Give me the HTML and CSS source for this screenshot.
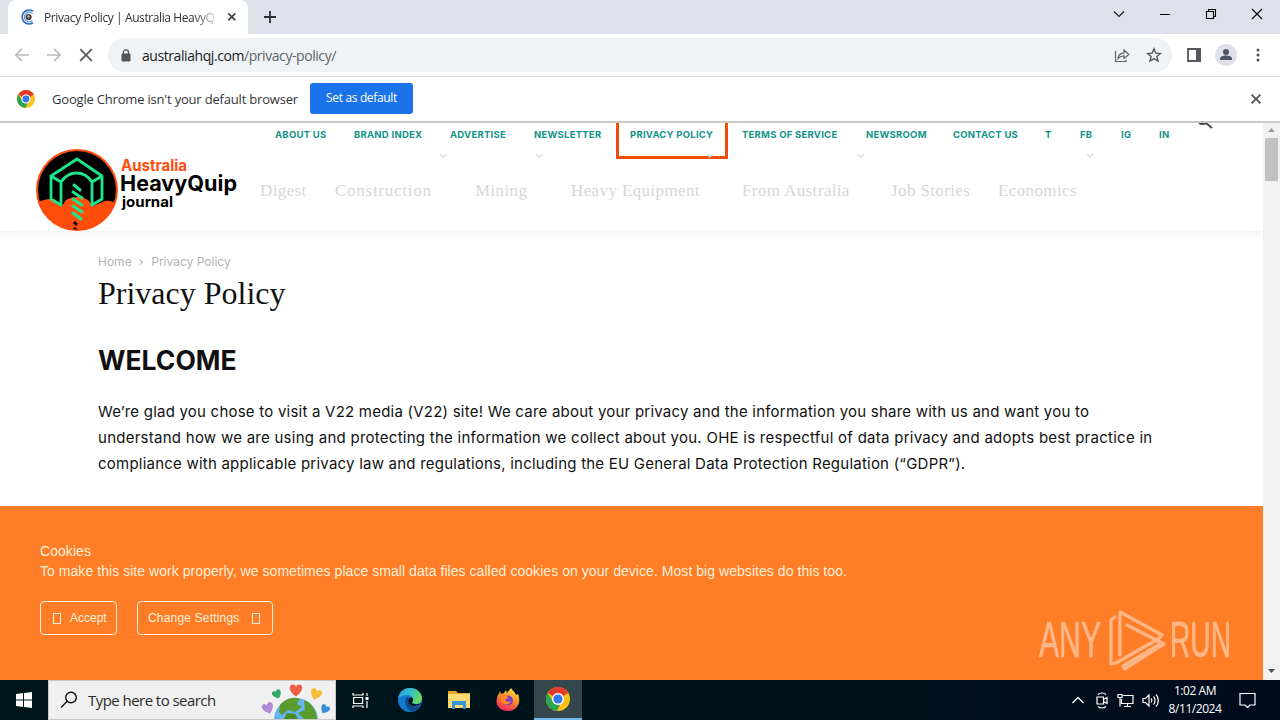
FILE: index.html
```html
<!DOCTYPE html>
<html lang="en">
<head>
<meta charset="UTF-8">
<meta name="viewport" content="width=device-width, initial-scale=1.0">
<title>Privacy Policy | Australia HeavyQuip Journal</title>
<link rel="stylesheet" href="styles.css">
</head>
<body>

<div class="tabs">
  <div class="tab">
    <svg class="favicon" width="16" height="16" viewBox="0 0 16 16" fill="none"><path d="M13 2.200A7 7 0 1 0 13 13.800" stroke="#2f6fc4" stroke-width="1.700"/><path d="M12.500 4.600A4.800 4.800 0 1 0 12.500 11.400" stroke="#5b93d6" stroke-width="1.200"/><circle cx="8.600" cy="8" r="3.100" fill="#4a4048"/><path d="M7 7l2-1 1 2-2 1z" fill="#c9aa98"/></svg>
    <span class="tab-title">Privacy Policy | Australia HeavyQ</span>
    <svg width="10" height="10" viewBox="0 0 10 10" stroke="#3c4043" stroke-width="1.700"><path d="M1.300 1.300l7 7M8.300 1.300l-7 7"/></svg>
  </div>
  <svg class="new-tab" width="12" height="12" viewBox="0 0 12 12" stroke="#2c2f33" stroke-width="1.800"><path d="M6 0v12M0 6h12"/></svg>
  <div class="window-buttons">
    <svg width="12" height="12" viewBox="0 0 12 12" fill="none" stroke="#222" stroke-width="1.200"><path d="M1 3.500l5 5 5-5"/></svg>
    <svg width="12" height="12" viewBox="0 0 12 12" stroke="#000"><path d="M1 6.500h10"/></svg>
    <svg width="12" height="12" viewBox="0 0 12 12" fill="none" stroke="#000" stroke-width="1.100"><path d="M1.500 3.500h7v7h-7zM3.500 3.500V1.500h7v7h-2"/></svg>
    <svg width="12" height="12" viewBox="0 0 12 12" stroke="#000" stroke-width="1.100"><path d="M1 1l10 10M11 1L1 11"/></svg>
  </div>
</div>

<div class="toolbar">
  <svg width="16" height="16" viewBox="0 0 16 16" fill="none" stroke="#b9bbbe" stroke-width="1.700"><path d="M15 8H2M8 1.800L1.800 8 8 14.200"/></svg>
  <svg width="16" height="16" viewBox="0 0 16 16" fill="none" stroke="#b9bbbe" stroke-width="1.700"><path d="M1 8h13M8 1.800L14.200 8 8 14.200"/></svg>
  <svg width="16" height="16" viewBox="0 0 16 16" fill="none" stroke="#54575b" stroke-width="1.700"><path d="M2.200 2.200l11.600 11.600M13.800 2.200L2.200 13.800"/></svg>
  <div class="address">
    <svg width="10" height="13" viewBox="0 0 10 13"><path d="M1 5h8v7H1z" fill="#54575b" stroke="#54575b" stroke-linejoin="round"/><path d="M2.500 5V3.300a2.500 2.500 0 0 1 5 0V5" fill="none" stroke="#54575b" stroke-width="1.300"/></svg>
    <span class="url"><b>australiahqj.com</b>/privacy-policy/</span>
    <svg class="share" width="16" height="15" viewBox="0 0 16 15" fill="none" stroke="#5f6368" stroke-width="1.200"><path d="M1.500 3v10.500h10.500v-2M4 10.500c.4-3.700 2.400-5.300 6-5.300V2l4.800 4.500L10 10.500V7.800C7.300 7.800 5.600 8.600 4 10.500z"/></svg>
    <svg width="16" height="16" viewBox="0 0 16 16" fill="none" stroke="#54575b" stroke-width="1.400"><path d="M8 1.800l1.800 4.300 4.600.4-3.500 3 1.100 4.500L8 11.600 4 14l1.100-4.500-3.500-3 4.600-.4z"/></svg>
  </div>
  <svg class="panel-icon" width="14" height="14" viewBox="0 0 14 14"><path d="M1 1h12v12H1z" fill="none" stroke="#54575b" stroke-width="1.800"/><path d="M9 0h5v14H9z" fill="#54575b"/></svg>
  <svg class="avatar" width="22" height="22" viewBox="0 0 22 22"><circle cx="11" cy="11" r="11" fill="#dee1e9"/><circle cx="11" cy="8" r="3" fill="#4f5668"/><path d="M5 16v-1c0-2.600 3-3.500 6-3.500s6 .9 6 3.500v1z" fill="#4f5668"/></svg>
  <svg width="4" height="14" viewBox="0 0 4 14" fill="#4b4e52"><circle cx="2" cy="2" r="1.500"/><circle cx="2" cy="7" r="1.500"/><circle cx="2" cy="12" r="1.500"/></svg>
</div>

<div class="infobar">
  <svg width="18" height="18" viewBox="0 0 24 24"><use href="#chrome"/></svg>
  <span class="infobar-text">Google Chrome isn't your default browser</span>
  <button class="default-btn">Set as default</button>
  <svg class="infobar-close" width="10" height="10" viewBox="0 0 10 10" stroke="#4b4e52" stroke-width="1.700"><path d="M.6.6l8.800 8.800M9.400.6L.6 9.400"/></svg>
</div>

<div class="viewport">
  <div class="page">
    <header class="site-header">
      <svg class="logo" width="204" height="82" viewBox="0 0 204 82">
        <defs><clipPath id="disc"><circle cx="41" cy="41" r="39.500"/></clipPath></defs>
        <circle cx="41" cy="41" r="41" fill="#ff4d0c"/>
        <circle cx="41" cy="41" r="39" fill="#000"/>
        <g clip-path="url(#disc)">
          <path d="M0 53c6-1 10-3 14-3l12 7 4-6c7-4 16-4 22 0l5 6 12-5c6-1 8 2 13 2v30H0z" fill="#ff4d0c"/>
          <g fill="none" stroke="#1ce68c" stroke-width="2.800" stroke-linejoin="round" stroke-linecap="round">
            <path d="M15 27L41 10l25 17v23l-10 6V33L66 27M15 27v23l10 6V33L15 27M25 33c8-12 23-12 31 0"/>
            <path stroke-width="3" d="M38 36l6 5M37 43l9 6M37 50l9 6M37 57l9 6M37 64l8 6"/>
          </g>
          <path d="M38 73l3 3M38 79l3 3" stroke="#000" stroke-width="3"/>
        </g>
        <g class="logo-text">
          <text x="85" y="22" font-size="15.500" fill="#ff4d0c" textLength="66" lengthAdjust="spacingAndGlyphs">Australia</text>
          <text x="84" y="42" font-size="21.500" textLength="117" lengthAdjust="spacingAndGlyphs">HeavyQuip</text>
          <text x="86" y="58" font-size="14.500" textLength="51" lengthAdjust="spacingAndGlyphs">journal</text>
        </g>
      </svg>
      <div class="menus">
        <nav class="top-menu">
          <a>ABOUT US</a><a>BRAND INDEX</a><a>ADVERTISE</a><a>NEWSLETTER</a><a class="current">PRIVACY POLICY</a><a>TERMS OF SERVICE</a><a>NEWSROOM</a><a>CONTACT US</a><a>T</a><a>FB</a><a>IG</a><a>IN</a>
        </nav>
        <div class="carets">
          <svg viewBox="0 0 8 5"><path d="M1 1l3 3 3-3"/></svg>
          <svg viewBox="0 0 8 5"><path d="M1 1l3 3 3-3"/></svg>
          <svg viewBox="0 0 8 5"><path d="M1 1l3 3 3-3"/></svg>
          <svg viewBox="0 0 8 5"><path d="M1 1l3 3 3-3"/></svg>
          <svg viewBox="0 0 8 5"><path d="M1 1l3 3 3-3"/></svg>
        </div>
        <nav class="main-menu">
          <a>Digest</a><a class="wide">Construction</a><a>Mining</a><a>Heavy Equipment</a><a>From Australia</a><a>Job Stories</a><a>Economics</a>
        </nav>
      </div>
      <svg class="search" width="16" height="7" viewBox="0 0 16 7" fill="none" stroke="#444" stroke-width="2"><path d="M1 0c2 1 5 1 7 0l6 5"/></svg>
    </header>

    <main class="article">
      <div class="crumbs"><span>Home</span><i>›</i><span>Privacy Policy</span></div>
      <h1>Privacy Policy</h1>
      <h2>WELCOME</h2>
      <p>
        <span class="line-1">We’re glad you chose to visit a V22 media (V22) site! We care about your privacy and the information you share with us and want you to</span><br>
        <span class="line-2">understand how we are using and protecting the information we collect about you. OHE is respectful of data privacy and adopts best practice in</span><br>
        <span class="line-3">compliance with applicable privacy law and regulations, including the EU General Data Protection Regulation (“GDPR”).</span>
      </p>
    </main>

    <section class="cookies">
      <div class="cookies-text">Cookies<br><span>To make this site work properly, we sometimes place small data files called cookies on your device. Most big websites do this too.</span></div>
      <div class="cookies-buttons">
        <button class="accept"><i class="box"></i>Accept</button>
        <button class="change">Change Settings<i class="box"></i></button>
      </div>
    </section>

    <svg class="watermark" width="200" height="64" viewBox="0 0 200 64">
      <text x="2" y="48" textLength="62" lengthAdjust="spacingAndGlyphs">ANY</text>
      <text x="133" y="48" textLength="61" lengthAdjust="spacingAndGlyphs">RUN</text>
      <g fill="none" stroke-width="3.200" stroke-linejoin="round" stroke-linecap="round">
        <path d="M78 8l-4 3v44l5-1 42-24"/>
        <path d="M83 46V3l42 23-3 3"/>
        <path d="M90 16l35 18-39 23 2 3 39-25"/>
      </g>
    </svg>
  </div>
  <div class="scrollbar">
    <svg width="7" height="4" viewBox="0 0 7 4"><path d="M0 4l3.500-4L7 4z" fill="#9a9a9a"/></svg>
    <div class="thumb"></div>
    <svg class="down" width="7" height="4" viewBox="0 0 7 4"><path d="M0 0l3.500 4L7 0z" fill="#505050"/></svg>
  </div>
</div>

<div class="taskbar">
  <div class="start"><svg width="16" height="16" viewBox="0 0 16 16" fill="#fff"><path d="M0 2l7-1v6.500H0zM8 .9L16 0v7.500H8zM0 8.500h7V15l-7-1zM8 8.500h8V16l-8-1z"/></svg></div>
  <div class="search-box">
    <svg width="18" height="18" viewBox="0 0 18 18" fill="none" stroke="#111" stroke-width="1.400"><circle cx="11" cy="6.500" r="5.300"/><path d="M7.200 10.300L1 16.500"/></svg>
    <span>Type here to search</span>
    <svg class="earth" width="70" height="37" viewBox="0 0 70 37">
      <defs><path id="heart" d="M0 6C-8 0-6-5-3-5-1-5 0-3 0-3s1-2 3-2c3 0 5 5-3 11z"/></defs>
      <circle cx="35" cy="38" r="22" fill="#66b4f2"/>
      <path d="M19 23c5-6 13-9 20-6l-3 5 5 3-7 5-7-2-6 5-3-3zM43 18c7 3 12 9 13 19H43l-6-6 7-3z" fill="#5b9b2b"/>
      <path d="M26 31l8 1 3 5H23z" fill="#4c8c24"/>
      <use href="#heart" transform="translate(7 26) rotate(-20)" fill="#b48ad8"/>
      <use href="#heart" transform="translate(16 12) rotate(-25) scale(.8)" fill="#35a766"/>
      <use href="#heart" transform="translate(35 8) scale(1.100)" fill="#ef5e47"/>
      <use href="#heart" transform="translate(55 12) rotate(20)" fill="#f6bd3b"/>
      <use href="#heart" transform="translate(64 27) rotate(30) scale(.8)" fill="#3d91dc"/>
    </svg>
  </div>
  <div class="apps">
    <div class="app"><svg width="17" height="17" viewBox="0 0 17 17" fill="none" stroke="#fff" stroke-width="1.200"><path d="M1 1v2h10V1M1 16v-2h10v2M1.600 5.500h9v6h-9zM15 1v3M15 9v7"/><path d="M13.500 5h3v3h-3z" fill="#fff" stroke="none"/></svg></div>
    <div class="app"><svg width="24" height="24" viewBox="0 0 24 24">
      <defs>
        <linearGradient id="edge-top" x1="0" y1="0" x2="1" y2=".3"><stop offset="0" stop-color="#1f9ee4"/><stop offset=".6" stop-color="#35c1c5"/><stop offset="1" stop-color="#68d95e"/></linearGradient>
      </defs>
      <circle cx="12" cy="12" r="12" fill="#1379ce"/>
      <path d="M0 11C1 3 7 0 12 0c7 0 12 5 12 10 0 4-3 6-6 6-3 0-4-1-4-2 1-1 1-2 1-3 0-2-3-4-6-4-4 0-8 2-9 4z" fill="url(#edge-top)"/>
      <path d="M9 9c-4 5-1 12 5 14.500 4-.7 7-3 8.500-6C16 21 8 16 11 10z" fill="#114a8c"/>
      <path d="M14 14c1-1 1.300-2 1-3-.5-2-3-2-4.200 0C9 14 12 18 16 18c3 0 5-.6 6.500-1.700l.8-1.300C20 17 14 16.500 14 14z" fill="#00151c"/>
    </svg></div>
    <div class="app"><svg width="22" height="20" viewBox="0 0 22 20"><path d="M0 1h8l2 2h12v15H0z" fill="#e9a72c"/><path d="M0 4h22v14H0z" fill="#fddb72"/><path d="M4 11h14v8h-3v-4H7v4H4z" fill="#3b94d9"/></svg></div>
    <div class="app"><svg width="24" height="24" viewBox="0 0 24 24">
      <defs><linearGradient id="fox" x1=".8" y1="0" x2=".3" y2="1"><stop offset="0" stop-color="#ffe94a"/><stop offset=".45" stop-color="#ff9125"/><stop offset="1" stop-color="#f5245f"/></linearGradient></defs>
      <path d="M4 3l1 3 3-1 2-3 1 3 4-5c2 3 4 4 5 7l2-1c4 10-2 17-10 17S-1 18 1 10c.4-3 2-4 3-7z" fill="url(#fox)"/>
      <circle cx="12" cy="12.500" r="5" fill="#7941c5"/>
      <path d="M5 8c3-2 6 0 8 2-2 0-3 1-4 2 1 2 4 2 6 1-1 4-7 5-10 0z" fill="#ff8b27"/>
    </svg></div>
    <div class="app active"><svg width="24" height="24" viewBox="0 0 24 24">
      <g id="chrome"><circle cx="12" cy="12" r="12" fill="#fbc116"/><path d="M12 12L1.600 6A12 12 0 0 1 22.400 6z" fill="#e33b2e"/><path d="M1.600 6l5.600 9L12 17l2 .5L11 24A12 12 0 0 1 1.600 6z" fill="#2da44e"/><circle cx="12" cy="12" r="6" fill="#fff"/><circle cx="12" cy="12" r="4.600" fill="#3478ed"/></g>
    </svg></div>
  </div>
  <div class="tray">
    <svg width="14" height="8" viewBox="0 0 14 8" fill="none" stroke="#fff" stroke-width="1.300"><path d="M1.500 7L7 1.500 12.500 7"/></svg>
    <svg class="meet" width="14" height="17" viewBox="0 0 14 17" fill="none" stroke="#fff" stroke-width="1.200"><path d="M3 2.500c2-2 6-2 8 0M3 14.500c2 2 6 2 8 0M2 5h6.500v7H2zM8.500 7.500L12 5.500v6l-3.500-2"/></svg>
    <svg width="17" height="15" viewBox="0 0 17 15" fill="none" stroke="#fff" stroke-width="1.200"><path d="M6 2.500h10v8H4.500V6M10.500 10.500v3M7 13.500h7M1 1.500h4v3H1zM3 4.500v9"/></svg>
    <svg width="17" height="15" viewBox="0 0 17 15" fill="none" stroke="#fff" stroke-width="1.200"><path d="M1 5.500h2.500L7 2v11L3.500 9.500H1zM9 5.500c1 1 1 3 0 4M11.500 3.500c2 2 2 6 0 8M14 1.500c3 3 3 9 0 12"/></svg>
    <div class="clock">1:02 AM<br>8/11/2024</div>
    <svg class="notice" width="17" height="17" viewBox="0 0 17 17" fill="none" stroke="#fff" stroke-width="1.200"><path d="M1 1.500h15v11.500h-5l-2.500 2.500L6 13H1z"/></svg>
  </div>
</div>

</body>
</html>
```
FILE: styles.css
```css
* {
  box-sizing: border-box;
}

body {
  margin: 0;
  width: 1280px;
  height: 720px;
  overflow: hidden;
  display: flex;
  flex-direction: column;
  background: #fff;
  font-family: "Open Sans", "Noto Sans", sans-serif;
}

svg {
  flex: none;
  display: block;
}

button {
  font-family: inherit;
  margin: 0;
}

/* Browser window */
.tabs {
  height: 34px;
  flex: none;
  display: flex;
  align-items: center;
  background: #dee1e9;
  padding-left: 8px;
}

.tab {
  width: 240px;
  height: 34px;
  display: flex;
  align-items: center;
  background: #fff;
  border-radius: 8px 8px 0 0;
  padding: 0 11px 0 12px;
}

.tab-title {
  width: 172px;
  margin: 0 11px 0 8px;
  overflow: hidden;
  white-space: nowrap;
  font-size: 12px;
  letter-spacing: -0.4px;
  color: #303236;
  -webkit-mask-image: linear-gradient(to right, #000 150px, transparent 176px);
  mask-image: linear-gradient(to right, #000 150px, transparent 176px);
}

.new-tab {
  margin-left: 16px;
}

.window-buttons {
  display: flex;
  gap: 34px;
  margin: -6px 17px 0 auto;
}

.toolbar {
  height: 43px;
  flex: none;
  display: flex;
  align-items: center;
  gap: 16px;
  padding: 0 20px 0 14px;
  border-bottom: 1px solid #d8d9db;
}

.address {
  flex: 1;
  height: 34px;
  margin: 0 -1px 0 -2px;
  display: flex;
  align-items: center;
  background: #f0f3f6;
  border-radius: 17px;
  padding: 0 10px 0 13px;
}

.url {
  margin-left: 11px;
  font-size: 14px;
  letter-spacing: -0.43px;
  color: #5f6368;
}

.url b {
  font-weight: 400;
  color: #202124;
}

.share {
  margin: 0 16px 0 auto;
}

.panel-icon {
  margin-right: -2px;
}

.avatar {
  margin-right: 3px;
}

.infobar {
  height: 44px;
  flex: none;
  display: flex;
  align-items: center;
  padding: 0 19px 0 17px;
}

.infobar-text {
  width: 246px;
  margin: 0 12px 0 17px;
  white-space: nowrap;
  font-size: 13px;
  letter-spacing: -0.19px;
  color: #333539;
}

.default-btn {
  width: 103px;
  height: 31px;
  margin-bottom: 2px;
  border: none;
  border-radius: 3px;
  background: #1a73e8;
  color: #fff;
  font-size: 12px;
  letter-spacing: -0.35px;
  padding: 0 0 2px;
}

.infobar-close {
  margin-left: auto;
}

/* Site */
.viewport {
  flex: 1;
  min-height: 0;
  display: flex;
  border-top: 2px solid #c9c9c9;
}

.page {
  position: relative;
  flex: 1;
  overflow: hidden;
  font-family: Inter, sans-serif;
}

.site-header {
  height: 108px;
  display: flex;
  padding-left: 36px;
  box-shadow: 0 1px 8px rgba(0, 0, 0, .08);
}

.logo {
  margin-top: 26px;
}

.logo-text {
  font-family: Inter, sans-serif;
  font-weight: 700;
}

.menus {
  width: 958px;
}

.top-menu {
  height: 36px;
  display: grid;
  grid-template-columns: 79px 96px 84px 96px 112px 124px 87px 92px 35px 41px 38px 40px;
  padding-left: 35px;
  font-size: 9.500px;
  font-weight: 700;
  letter-spacing: 0.25px;
  line-height: 23px;
  white-space: nowrap;
  color: #119488;
}

.top-menu .current {
  width: 112px;
  margin-left: -14px;
  padding-left: 11px;
  border: 3px solid #f04e10;
  border-top: 0;
}

.carets {
  display: grid;
  grid-template-columns: 96px 171px 151px 229px 8px;
  padding-left: 199px;
  margin-top: -6px;
}

.carets svg {
  width: 8px;
  height: 5px;
  fill: none;
  stroke: #dcdcdc;
  stroke-width: 1.300;
}

.main-menu {
  display: grid;
  grid-template-columns: 75px 140px 96px 171px 149px 107px 90px;
  margin-top: 21px;
  padding-left: 20px;
  font-family: "Liberation Serif", serif;
  font-size: 17px;
  letter-spacing: 0.38px;
  line-height: 24px;
  white-space: nowrap;
  color: #d6d6d6;
}

.main-menu .wide {
  letter-spacing: 0.75px;
}

.article {
  height: 275px;
  padding: 22px 98px 0;
}

.crumbs {
  height: 18px;
  display: flex;
  line-height: 18px;
  font-size: 12px;
  color: #b3b3b3;
}

.crumbs i {
  margin: 0 8px 0 7px;
  font-style: normal;
}

h1 {
  margin: 2px 0 0;
  font-family: "Liberation Serif", serif;
  font-size: 32px;
  font-weight: 400;
  line-height: 40px;
  color: #111;
}

h2 {
  margin: 28px 0 0;
  font-size: 26.500px;
  font-weight: 700;
  line-height: 38px;
  color: #111;
}

p {
  margin: 20px 0 0;
  font-size: 15px;
  line-height: 26px;
  white-space: nowrap;
  color: #111;
}

.line-1,
.line-3 {
  letter-spacing: 0.225px;
}

.line-2 {
  letter-spacing: 0.26px;
}

.cookies {
  height: 174px;
  padding: 35px 40px 0;
  background: #ff7d27;
  color: #fff0d8;
  font-family: "Liberation Sans", sans-serif;
}

.cookies-text {
  font-size: 14px;
  letter-spacing: 0.05px;
  line-height: 20px;
}

.cookies-buttons {
  display: flex;
  gap: 20px;
  margin-top: 20px;
}

.cookies button {
  height: 34px;
  display: flex;
  align-items: center;
  border: 1px solid #fff0d8;
  border-radius: 4px;
  background: none;
  color: inherit;
  font-size: 12px;
  padding: 0 10px;
}

.cookies .accept {
  width: 77px;
  gap: 9px;
}

.cookies .change {
  width: 136px;
  gap: 13px;
  letter-spacing: 0.18px;
}

.box {
  width: 8px;
  height: 11px;
  flex: none;
  border: 1px solid #fff0d8;
}

.accept .box {
  margin-left: 2px;
}

/* Recorder badge over the page */
.watermark {
  position: absolute;
  left: 1037px;
  bottom: 7px;
  opacity: .45;
  fill: #fff;
  stroke: #fff;
  font-family: "Liberation Sans", sans-serif;
  font-size: 50px;
}

.watermark text {
  stroke-width: 0.6;
}

.scrollbar {
  width: 17px;
  display: flex;
  flex-direction: column;
  align-items: center;
  background: #f1f1f1;
  padding: 5px 0 7px;
}

.thumb {
  width: 13px;
  height: 43px;
  margin-top: 6px;
  background: #c1c1c1;
}

.down {
  margin-top: auto;
}

/* Taskbar */
.taskbar {
  height: 40px;
  flex: none;
  display: flex;
  background: linear-gradient(to right, #00171d, #00121b 60%, #000b1c);
  color: #fff;
}

.start {
  width: 48px;
  display: flex;
  align-items: center;
  justify-content: center;
}

.search-box {
  width: 288px;
  display: flex;
  align-items: center;
  background: #f0f0f0;
  border: 1px solid #c8c8c8;
  padding-left: 11px;
  font-size: 15px;
  color: #2b2b2b;
}

.search-box span {
  margin-left: 10px;
  letter-spacing: -0.55px;
  white-space: nowrap;
}

.earth {
  margin: 1px 4px 0 auto;
}

.apps {
  display: flex;
}

.app {
  width: 49px;
  display: flex;
  align-items: center;
  justify-content: center;
}

.app.active {
  width: 48px;
  margin-left: 2px;
  background: #34474d;
  border-bottom: 2px solid #76b9ed;
}

.tray {
  margin-left: auto;
  display: flex;
  align-items: center;
  gap: 8px;
  padding-right: 24px;
}

.meet {
  margin-left: 2px;
}

.clock {
  width: 56px;
  text-align: center;
  font-size: 12px;
  line-height: 18px;
  letter-spacing: -0.45px;
}

.notice {
  margin-left: 8px;
}
```
